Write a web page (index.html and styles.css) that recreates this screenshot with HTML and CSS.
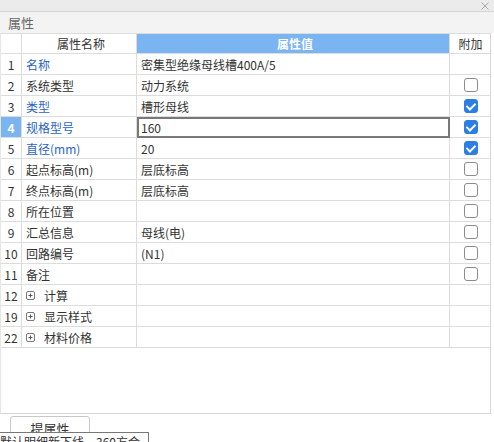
FILE: index.html
```html
<!DOCTYPE html>
<html>
<head>
<meta charset="utf-8">
<link rel="stylesheet" href="styles.css">
</head>
<body>
<div class="window">
  <div class="topbar"><svg class="close" width="8" height="8" viewBox="0 0 8 8"><path d="M0.5 0.5 L7.5 7.5 M7.5 0.5 L0.5 7.5" stroke="#a8a8a8" stroke-width="1" fill="none"/></svg></div>
  <div class="titlebar">属性</div>
  <div class="panel">
    <div class="grid">
      <div class="c num hd"></div>
      <div class="c name hd center">属性名称</div>
      <div class="c val hd blue center">属性值</div>
      <div class="c chk hd center">附加</div>

      <div class="c num">1</div><div class="c name link">名称</div><div class="c val">密集型绝缘母线槽400A/5</div><div class="c chk"></div>
      <div class="c num">2</div><div class="c name">系统类型</div><div class="c val">动力系统</div><div class="c chk"><span class="box"></span></div>
      <div class="c num">3</div><div class="c name link">类型</div><div class="c val">槽形母线</div><div class="c chk"><span class="box on"></span></div>
      <div class="c num sel">4</div><div class="c name link">规格型号</div><div class="c val edit">160</div><div class="c chk"><span class="box on"></span></div>
      <div class="c num">5</div><div class="c name link">直径(mm)</div><div class="c val">20</div><div class="c chk"><span class="box on"></span></div>
      <div class="c num">6</div><div class="c name">起点标高(m)</div><div class="c val">层底标高</div><div class="c chk"><span class="box"></span></div>
      <div class="c num">7</div><div class="c name">终点标高(m)</div><div class="c val">层底标高</div><div class="c chk"><span class="box"></span></div>
      <div class="c num">8</div><div class="c name">所在位置</div><div class="c val"></div><div class="c chk"><span class="box"></span></div>
      <div class="c num">9</div><div class="c name">汇总信息</div><div class="c val">母线(电)</div><div class="c chk"><span class="box"></span></div>
      <div class="c num">10</div><div class="c name">回路编号</div><div class="c val">(N1)</div><div class="c chk"><span class="box"></span></div>
      <div class="c num">11</div><div class="c name">备注</div><div class="c val"></div><div class="c chk"><span class="box"></span></div>
      <div class="c num">12</div><div class="c name"><svg class="plus" width="9" height="9" viewBox="0 0 9 9"><rect x="0.5" y="0.5" width="8" height="8" rx="1.5" fill="none" stroke="#7a7a7a"/><path d="M2.5 4.5 H6.5 M4.5 2.5 V6.5" stroke="#555" stroke-width="1"/></svg>计算</div><div class="c val"></div><div class="c chk"></div>
      <div class="c num">19</div><div class="c name"><svg class="plus" width="9" height="9" viewBox="0 0 9 9"><rect x="0.5" y="0.5" width="8" height="8" rx="1.5" fill="none" stroke="#7a7a7a"/><path d="M2.5 4.5 H6.5 M4.5 2.5 V6.5" stroke="#555" stroke-width="1"/></svg>显示样式</div><div class="c val"></div><div class="c chk"></div>
      <div class="c num">22</div><div class="c name"><svg class="plus" width="9" height="9" viewBox="0 0 9 9"><rect x="0.5" y="0.5" width="8" height="8" rx="1.5" fill="none" stroke="#7a7a7a"/><path d="M2.5 4.5 H6.5 M4.5 2.5 V6.5" stroke="#555" stroke-width="1"/></svg>材料价格</div><div class="c val"></div><div class="c chk"></div>
    </div>
  </div>
  <div class="footer">
    <button class="btn">提属性</button>
  </div>
  <div class="tooltip">默认明细新下线，360方合</div>
</div>
</body>
</html>
```

FILE: styles.css
```css
html, body {
  margin: 0;
  padding: 0;
  background: #ffffff;
}
body {
  font-family: "Noto Sans CJK SC", "Noto Sans", sans-serif;
  font-size: 12px;
  color: #333333;
}
.window {
  position: relative;
  width: 494px;
  height: 442px;
  overflow: hidden;
}
.topbar {
  height: 11px;
  background: #ebebeb;
  border-bottom: 1px solid #d4d4d4;
  display: flex;
  justify-content: flex-end;
  align-items: flex-start;
  padding-right: 5px;
}
.close {
  display: block;
  margin-top: 2px;
}
.titlebar {
  height: 21px;
  line-height: 21px;
  background: #f3f3f3;
  padding-left: 8px;
  font-size: 13px;
  color: #666666;
}
.panel {
  width: 491px;
  height: 381px;
  border-right: 1px solid #d6d6d6;
  border-bottom: 1px solid #d6d6d6;
  border-left: 1px solid #e6e6e6;
  box-sizing: border-box;
  background: #ffffff;
}
.grid {
  display: grid;
  grid-template-columns: 21px 115px 313px 41px;
  grid-auto-rows: 21px;
}
.c {
  box-sizing: border-box;
  border-right: 1px solid #dcdcdc;
  border-bottom: 1px solid #dcdcdc;
  display: flex;
  align-items: center;
  white-space: nowrap;
  overflow: hidden;
  line-height: 20px;
  padding-top: 1px;
}
.hd {
  border-top: 1px solid #dcdcdc;
  padding-top: 0;
  font-size: 12px;
  color: #333333;
}
.center {
  justify-content: center;
}
.blue {
  background: #7ab4f1;
  color: #ffffff;
  font-weight: bold;
}
.num {
  justify-content: center;
  color: #333333;
}
.num.sel {
  background: #7ab4f1;
  color: #ffffff;
  font-weight: bold;
}
.name {
  padding-left: 4px;
}
.link {
  color: #2a64c5;
}
.val {
  padding-left: 4px;
}
.val.edit {
  border: 2px solid #787878;
  padding-left: 2px;
  padding-top: 0;
}
.chk {
  justify-content: center;
  border-right: none;
  padding-top: 0;
}
.box {
  width: 14px;
  height: 14px;
  box-sizing: border-box;
  border: 1px solid #8c8c8c;
  border-radius: 3px;
  background: #ffffff;
  position: relative;
}
.box.on {
  background: #2a7ee6;
  border-color: #2a7ee6;
}
.box.on::after {
  content: "";
  position: absolute;
  left: 3px;
  top: 1px;
  width: 4px;
  height: 7px;
  border-right: 2px solid #ffffff;
  border-bottom: 2px solid #ffffff;
  transform: rotate(45deg);
}
.plus {
  display: block;
  flex: none;
  margin-right: 9px;
  margin-top: -1px;
}
.footer {
  padding: 2px 0 0 10px;
}
.btn {
  width: 80px;
  height: 24px;
  border: 1px solid #c8c8c8;
  border-radius: 3px;
  background: #ffffff;
  font-family: "Noto Sans CJK SC", "Noto Sans", sans-serif;
  font-size: 13px;
  color: #333333;
  padding: 2px 0 0 0;
  line-height: 18px;
}
.tooltip {
  position: absolute;
  left: -1px;
  top: 432px;
  width: 148px;
  height: 20px;
  border: 1px solid #777777;
  background: #ffffff;
  font-size: 12px;
  line-height: 16px;
  padding-top: 1px;
  color: #333333;
  white-space: nowrap;
  overflow: hidden;
}
```
